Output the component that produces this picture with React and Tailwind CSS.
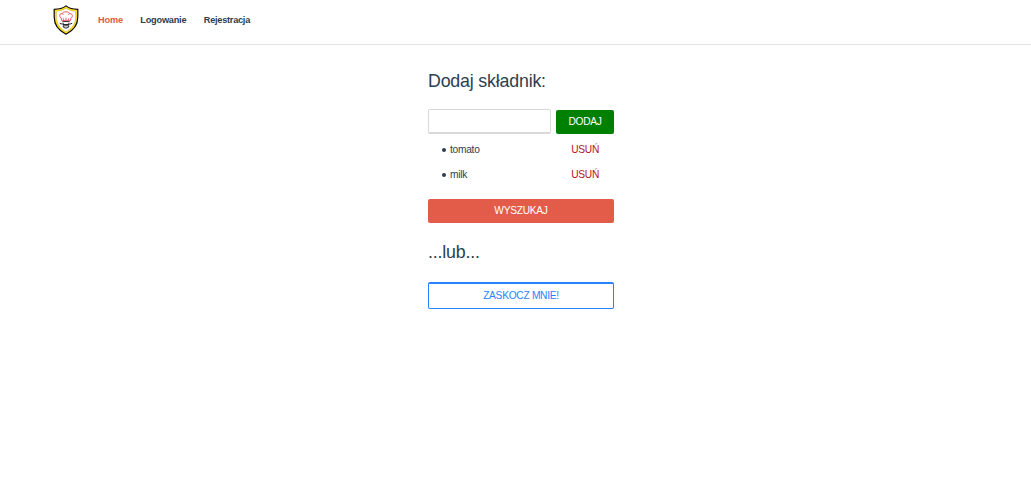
function Crest() {
  return (
    <svg width="26" height="30" viewBox="0 0 26 30" fill="none" aria-hidden="true">
      <path d="M13 .9C10.300 3 6.800 4.300 1.200 4.400V12c0 8 4.500 13.600 11.800 17.200C20.300 25.600 24.800 20 24.800 12V4.400C19.200 4.300 15.700 3 13 .9Z" fill="#ffdd15" stroke="#080808" strokeWidth="1.200" />
      <path d="M13 3.300C10.500 5.100 7.200 6.200 3.500 6.300V12c0 6.600 3.700 11.500 9.500 14.700 5.800-3.200 9.500-8.100 9.500-14.700V6.300C18.800 6.200 15.500 5.100 13 3.300Z" fill="#fff" stroke="#8a8a78" strokeWidth=".3" />
      <path d="M9 16 8.300 13.200C5.900 12 6.200 8.600 9 8.600 10 6.200 15.500 6.200 16.800 8.600c3 0 3.300 3.500 1.100 4.600L17.200 16c-2.500-1-5.700-1-8.200 0ZM10.300 13.400l.3 1.500M13 12.700v2M15.600 13.400l-.3 1.500M9 8.600l1.500 1M16.800 8.600l-1.600 1" stroke="#ef4350" strokeWidth=".9" />
      <path d="M9.300 16.800q3.700-.8 7.400 0M6.800 18.300l2.200.8 2-.4M19.200 18.300l-2.200.8-2-.4M10 19.500h6M10 20.800q0 2.300 3 2.300t3-2.300Z" stroke="#111" strokeWidth=".9" />
    </svg>
  );
}

function Ingredient({ name }) {
  return (
    <li className="flex h-[25px] items-center pl-[14px] pr-[15px]">
      <span className="mr-1 mt-px size-1 rounded-full bg-[#2c3e50]" />
      <span>{name}</span>
      <button className="ml-auto text-[#b5121b]">USUŃ</button>
    </li>
  );
}

export default function App() {
  return (
    <div className="min-h-screen bg-white font-['Liberation_Sans',Arial,sans-serif] text-[10.2px] tracking-[-0.27px] text-[#2c3e50]">
      <header className="flex h-[45px] items-start border-b border-[#e4e4e4] pl-[53px] pt-[5px]">
        <Crest />
        <nav className="ml-[19px] flex h-8 items-center gap-[17.5px] text-[9.2px] font-bold tracking-[-0.26px]">
          <a className="tracking-[-0.18px] text-[#e35b49]">Home</a>
          <a className="tracking-[-0.22px]">Logowanie</a>
          <a>Rejestracja</a>
        </nav>
      </header>
      <main className="ml-[428px] w-[186px] pt-[26px]">
        <h1 className="h-[38px] text-[17.8px] leading-[21px] tracking-[-0.18px]">Dodaj składnik:</h1>
        <form className="flex h-[25px] items-end justify-between">
          <input aria-label="Składnik" className="h-[25px] w-[123px] rounded-[2px] border border-b-2 border-[#d8d8d8] px-2 outline-none" />
          <button type="button" className="h-6 w-[58px] rounded-[2px] bg-[#008000] text-white">DODAJ</button>
        </form>
        <ul className="pt-[3px]">
          <Ingredient name="tomato" />
          <Ingredient name="milk" />
        </ul>
        <button className="mt-3 block h-6 w-full rounded-[2px] bg-[#e35b49] text-white">WYSZUKAJ</button>
        <h2 className="mt-[19px] h-10 text-[17.8px] leading-[21px] tracking-[-0.18px]">...lub...</h2>
        <button className="block h-[27px] w-full rounded-[2px] border border-t-2 border-[#2684ff] text-[#2684ff]">ZASKOCZ MNIE!</button>
      </main>
    </div>
  );
}
